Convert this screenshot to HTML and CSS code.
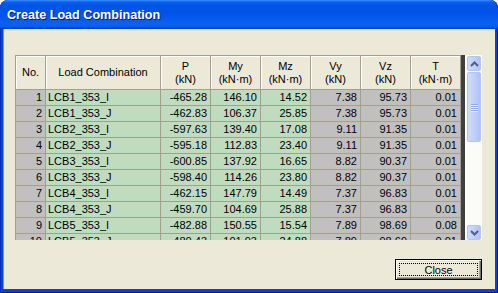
FILE: index.html
```html
<!DOCTYPE html>
<html lang="en">
<head>
<meta charset="UTF-8" />
<title>Create Load Combination</title>
<link rel="stylesheet" href="styles.css">
</head>
<body>
  <div class="window">
    <div class="titlebar">
      <span class="title">Create Load Combination</span>
    </div>
    <div class="client">
      <div class="grid-box">
        <div class="grid-view">
          <table class="grid">
            <colgroup>
              <col class="c-no"><col class="c-name">
              <col class="c-num"><col class="c-num"><col class="c-num">
              <col class="c-num"><col class="c-num"><col class="c-num">
            </colgroup>
            <thead>
              <tr>
                <th>No.</th>
                <th>Load Combination</th>
                <th>P<br>(kN)</th>
                <th>My<br>(kN&middot;m)</th>
                <th>Mz<br>(kN&middot;m)</th>
                <th>Vy<br>(kN)</th>
                <th>Vz<br>(kN)</th>
                <th>T<br>(kN&middot;m)</th>
              </tr>
            </thead>
            <tbody>
              <tr><td class="no">1</td><td class="name">LCB1_353_I</td><td class="g">-465.28</td><td class="g">146.10</td><td class="g">14.52</td><td>7.38</td><td>95.73</td><td>0.01</td></tr>
              <tr><td class="no">2</td><td class="name">LCB1_353_J</td><td class="g">-462.83</td><td class="g">106.37</td><td class="g">25.85</td><td>7.38</td><td>95.73</td><td>0.01</td></tr>
              <tr><td class="no">3</td><td class="name">LCB2_353_I</td><td class="g">-597.63</td><td class="g">139.40</td><td class="g">17.08</td><td>9.11</td><td>91.35</td><td>0.01</td></tr>
              <tr><td class="no">4</td><td class="name">LCB2_353_J</td><td class="g">-595.18</td><td class="g">112.83</td><td class="g">23.40</td><td>9.11</td><td>91.35</td><td>0.01</td></tr>
              <tr><td class="no">5</td><td class="name">LCB3_353_I</td><td class="g">-600.85</td><td class="g">137.92</td><td class="g">16.65</td><td>8.82</td><td>90.37</td><td>0.01</td></tr>
              <tr><td class="no">6</td><td class="name">LCB3_353_J</td><td class="g">-598.40</td><td class="g">114.26</td><td class="g">23.80</td><td>8.82</td><td>90.37</td><td>0.01</td></tr>
              <tr><td class="no">7</td><td class="name">LCB4_353_I</td><td class="g">-462.15</td><td class="g">147.79</td><td class="g">14.49</td><td>7.37</td><td>96.83</td><td>0.01</td></tr>
              <tr><td class="no">8</td><td class="name">LCB4_353_J</td><td class="g">-459.70</td><td class="g">104.69</td><td class="g">25.88</td><td>7.37</td><td>96.83</td><td>0.01</td></tr>
              <tr><td class="no">9</td><td class="name">LCB5_353_I</td><td class="g">-482.88</td><td class="g">150.55</td><td class="g">15.54</td><td>7.89</td><td>98.69</td><td>0.08</td></tr>
              <tr><td class="no">10</td><td class="name">LCB5_353_J</td><td class="g">-480.43</td><td class="g">101.93</td><td class="g">24.88</td><td>7.89</td><td>98.69</td><td>0.01</td></tr>
            </tbody>
          </table>
        </div>
        <div class="grid-edge"></div>
        <div class="scrollbar">
          <div class="sb-btn">
            <svg viewBox="0 0 9 6" aria-hidden="true"><path d="M1 5 L4.5 1.5 L8 5" /></svg>
          </div>
          <div class="sb-thumb">
            <span class="grip"></span><span class="grip"></span><span class="grip"></span><span class="grip"></span>
          </div>
          <div class="sb-track"></div>
          <div class="sb-btn">
            <svg viewBox="0 0 9 6" aria-hidden="true"><path d="M1 1 L4.5 4.5 L8 1" /></svg>
          </div>
        </div>
      </div>
      <div class="actions">
        <button class="btn">Close</button>
      </div>
    </div>
  </div>
</body>
</html>
```

FILE: styles.css
```css
* {
  margin: 0;
  padding: 0;
  box-sizing: border-box;
}

body {
  width: 498px;
  height: 293px;
  background: #ffffff;
  font-family: "Liberation Sans", Arial, sans-serif;
  font-size: 11px;
  color: #000;
  overflow: hidden;
}

/* Window frame */
.window {
  width: 498px;
  height: 293px;
  display: flex;
  flex-direction: column;
  background: #0842d6;
  border-radius: 8px 8px 0 0;
  padding: 0 3px 4px 3px;
  box-shadow: inset 1px 0 #0030b8, inset -1px 0 #00138c, inset 0 -1px #00138c;
  overflow: hidden;
}

.titlebar {
  height: 29px;
  margin: 0 -3px;
  padding-left: 7px;
  display: flex;
  align-items: center;
  border-radius: 8px 8px 0 0;
  background: linear-gradient(180deg, #3d8ffb 0, #0a5ef0 2px, #0055e8 5px, #0053e6 45%, #0a62f5 85%, #0459f0 93%, #0040cf 97%, #0036c0 100%);
}

.title {
  color: #fff;
  font-weight: bold;
  font-size: 12.6px;
  text-shadow: 1px 1px #0a1a78;
  margin-top: 1px;
}

.client {
  flex: 1;
  background: #ece9d8;
  padding: 26px 13px 0 12px;
  display: flex;
  flex-direction: column;
  box-shadow: inset 1px 0 #6d8fe8;
}

/* Grid control */
.grid-box {
  height: 185px;
  display: flex;
}

.grid-view {
  width: 446px;
  height: 185px;
  overflow: hidden;
}

.grid {
  table-layout: fixed;
  width: 446px;
  border-collapse: separate;
  border-spacing: 1px;
  background: #a39f8b;
}

.c-no { width: 29px; }
.c-name { width: 114px; }
.c-num { width: 49px; }

.grid th {
  height: 33px;
  font-weight: normal;
  line-height: 13px;
  text-align: center;
  background: #ece9d8;
  box-shadow: inset 1px 1px #fff;
}

.grid td {
  height: 15px;
  line-height: 15px;
  text-align: right;
  padding-right: 3px;
  background: #c0c0c0;
  white-space: nowrap;
  overflow: hidden;
}

.grid td.g {
  background: #c0dcc0;
}

.grid td.name {
  background: #c0dcc0;
  text-align: left;
  padding-left: 2px;
}

.grid-edge {
  width: 4px;
  background: #404040;
}

/* Scrollbar */
.scrollbar {
  width: 17px;
  display: flex;
  flex-direction: column;
  gap: 1px;
  padding: 1px 1px 0 1px;
  background: #fbfbf8;
  border-left: 1px solid #ffffff;
}

.sb-btn,
.sb-thumb {
  border: 1px solid #b3c6f2;
  border-radius: 2px;
  background: linear-gradient(90deg, #d2ddfb, #bccdfa 60%, #b0c2f3);
}

.sb-btn {
  height: 15px;
  display: flex;
  justify-content: center;
  align-items: center;
}

.sb-btn svg {
  width: 9px;
  height: 6px;
}

.sb-btn svg path {
  fill: none;
  stroke: #4d6185;
  stroke-width: 2;
}

.sb-thumb {
  height: 70px;
  display: flex;
  flex-direction: column;
  justify-content: center;
  align-items: center;
  gap: 1px;
}

.grip {
  width: 7px;
  height: 1px;
  background: #8fa7e6;
  box-shadow: 0 1px #eef3fe;
}

.sb-track {
  flex: 1;
}

/* Buttons */
.actions {
  margin-top: 19px;
  display: flex;
  justify-content: flex-end;
}

.btn {
  width: 87px;
  height: 21px;
  font-family: "Liberation Sans", Arial, sans-serif;
  font-size: 11px;
  background: #ece9d8;
  border: 1px solid #000;
  box-shadow: inset 1px 1px #fff, inset -1px -1px #716f64, inset -2px -2px #aca899;
  outline: 1px dotted #000;
  outline-offset: -5px;
}
```
